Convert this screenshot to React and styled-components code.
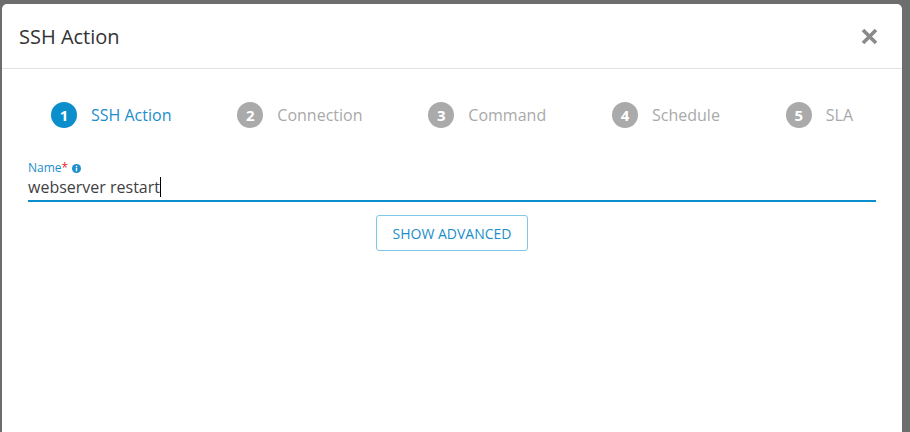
import React from "react";
import styled, { createGlobalStyle } from "styled-components";

const Global = createGlobalStyle`
  html, body { margin: 0; padding: 0; background: #6d6d6d; }
  body { font-family: "Open Sans", "Liberation Sans", sans-serif; overflow: hidden; }
`;

const Page = styled.div`
  height: 432px;
  padding: 4px 8px 0 2px;
  box-sizing: border-box;
  display: flex;
`;

const Modal = styled.div`
  width: 900px;
  height: 428px;
  background: #fff;
  border-radius: 5px 5px 0 0;
  display: flex;
  flex-direction: column;
`;

const Header = styled.div`
  height: 64px;
  display: flex;
  align-items: center;
  justify-content: space-between;
  padding: 0 24px 0 17px;
  border-bottom: 1px solid #e3e3e3;
`;

const Title = styled.h1`
  margin: 0;
  font-size: 20px;
  font-weight: 400;
  color: #333;
`;

const Close = styled.button`
  border: 0;
  background: none;
  padding: 0;
  width: 17px;
  height: 17px;
  display: flex;
  cursor: pointer;
`;

const Steps = styled.div`
  display: flex;
  justify-content: space-between;
  align-items: center;
  padding: 33px 49px 0 49px;
`;

const Step = styled.div`
  display: flex;
  align-items: center;
  gap: 14px;
  color: ${(p) => (p.$active ? "#1b8ecb" : "#a9a9a9")};
  font-size: 16px;
`;

const Dot = styled.span`
  width: 26px;
  height: 26px;
  border-radius: 50%;
  background: ${(p) => (p.$active ? "#0b8fcc" : "#aaaaaa")};
  color: #fff;
  font-weight: 700;
  font-size: 15px;
  display: flex;
  align-items: center;
  justify-content: center;
`;

const Field = styled.div`
  margin: 33px 26px 0 26px;
  display: flex;
  flex-direction: column;
`;

const Label = styled.div`
  font-size: 12px;
  line-height: 14px;
  color: #1b8ecb;
  display: flex;
  align-items: center;
`;

const Req = styled.span`
  color: #e8242a;
  margin-right: 4px;
`;

const Value = styled.div`
  font-size: 16px;
  line-height: 22px;
  color: #3f3f3f;
  padding: 1px 0 2px;
  border-bottom: 2px solid #0b8fcc;
  display: flex;
  align-items: center;
`;

const Caret = styled.span`
  display: inline-block;
  width: 1px;
  height: 20px;
  background: #000;
  margin-left: 0;
`;

const ButtonRow = styled.div`
  display: flex;
  justify-content: center;
  margin-top: 13px;
`;

const Advanced = styled.button`
  width: 152px;
  height: 36px;
  border: 1px solid #80c6e6;
  border-radius: 3px;
  background: #fff;
  color: #1b8ecb;
  font-family: "Open Sans", "Liberation Sans", sans-serif;
  font-size: 14px;
  text-transform: uppercase;
  padding: 0;
  cursor: pointer;
`;

const steps = ["SSH Action", "Connection", "Command", "Schedule", "SLA"];

export default function App() {
  return (
    <>
      <Global />
      <Page>
        <Modal>
          <Header>
            <Title>SSH Action</Title>
            <Close aria-label="Close">
              <svg width="17" height="17" viewBox="0 0 17 17">
                <path d="M2 2 L15 15 M15 2 L2 15" stroke="#8a8a8a" strokeWidth="3.6" strokeLinecap="butt" />
              </svg>
            </Close>
          </Header>
          <Steps>
            {steps.map((s, i) => (
              <Step key={s} $active={i === 0}>
                <Dot $active={i === 0}>{i + 1}</Dot>
                {s}
              </Step>
            ))}
          </Steps>
          <Field>
            <Label>
              Name<Req>*</Req>
              <svg width="9" height="9" viewBox="0 0 10 10">
                <circle cx="5" cy="5" r="5" fill="#1b8ecb" />
                <rect x="4.2" y="4.2" width="1.6" height="3.8" fill="#fff" />
                <rect x="4.2" y="2" width="1.6" height="1.5" fill="#fff" />
              </svg>
            </Label>
            <Value>
              webserver restart<Caret />
            </Value>
          </Field>
          <ButtonRow>
            <Advanced>Show Advanced</Advanced>
          </ButtonRow>
        </Modal>
      </Page>
    </>
  );
}
